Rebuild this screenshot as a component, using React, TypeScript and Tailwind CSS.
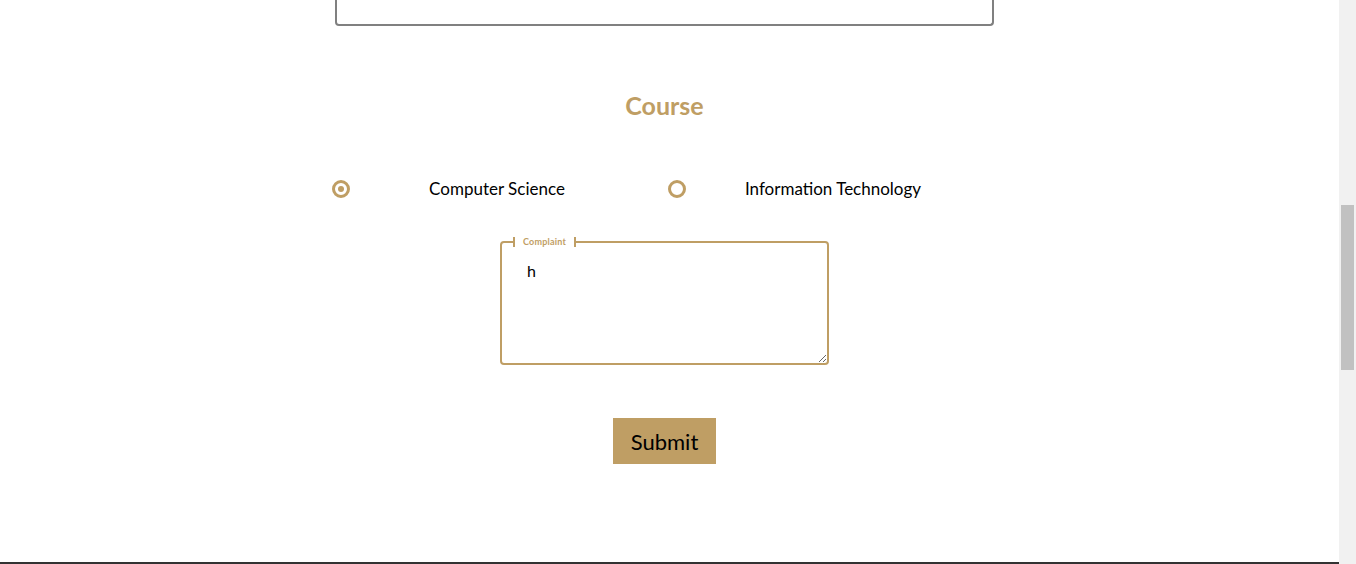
const gold = 'text-[#bf9e64]';

function Radio({ checked }: { checked?: boolean }) {
    return (
        <span className="flex h-[18px] w-[18px] shrink-0 items-center justify-center rounded-full border-[3px] border-[#bf9e64]">
            {checked && <span className="h-[6px] w-[6px] rounded-full bg-[#bf9e64]" />}
        </span>
    );
}

function Option({ label, checked }: { label: string; checked?: boolean }) {
    return (
        <label className="flex w-[312px] items-center">
            <Radio checked={checked} />
            <span className="flex-1 text-center text-[17px] text-black">{label}</span>
        </label>
    );
}

export default function App() {
    return (
        <div className="flex h-[564px] overflow-hidden bg-white font-['Lato',sans-serif]">
            <div className="flex flex-1 flex-col">
                <div className="flex-1">
                    <div className="ml-[335px] w-[659px]">
                        <div className="h-[26px] rounded-b-[4px] border-2 border-t-0 border-[#808080]" />

                        <h2 className={`mt-[63px] text-center text-[25px] font-bold leading-[32px] ${gold}`}>
                            Course
                        </h2>

                        <div className="-ml-[3px] mt-[56px] flex h-[24px] gap-[24px]">
                            <Option label="Computer Science" checked />
                            <Option label="Information Technology" />
                        </div>

                        <fieldset className="mx-auto mt-[36px] w-[329px] rounded-[4px] border-2 border-[#bf9e64]">
                            <legend className="ml-[11px] border-x-2 border-[#bf9e64] px-[8px] text-[9px] font-bold leading-[10px] tracking-[0.2px] text-[#bf9e64]">
                                Complaint
                            </legend>
                            <textarea
                                defaultValue="h"
                                className="block h-[116px] w-full px-[25px] pt-[12px] text-[16px] leading-[24px] text-black outline-none"
                            />
                        </fieldset>

                        <div className="mt-[53px] flex justify-center">
                            <button className="h-[46px] w-[103px] bg-[#bf9e64] text-[22px] text-black">
                                Submit
                            </button>
                        </div>
                    </div>
                </div>
                <div className="h-[2px] bg-[#333333]" />
            </div>
            <div className="w-[17px] bg-[#f1f1f1] px-[2px] pt-[205px]">
                <div className="h-[165px] bg-[#c1c1c1]" />
            </div>
        </div>
    );
}
